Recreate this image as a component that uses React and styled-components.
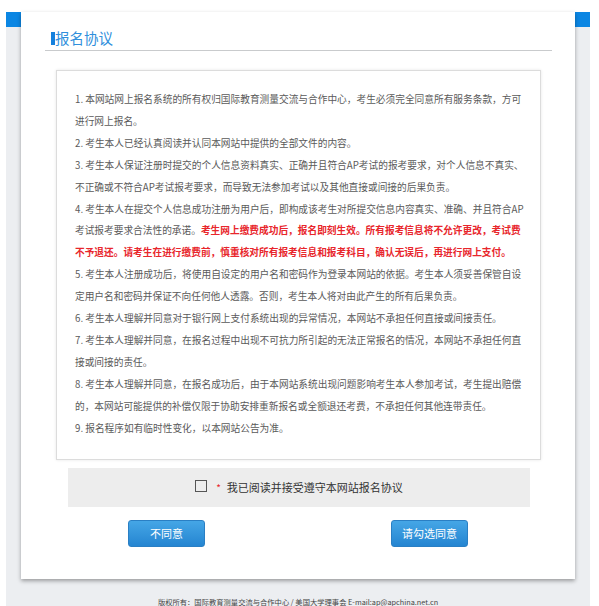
import React from 'react';
import styled, { createGlobalStyle } from 'styled-components';

const GlobalStyle = createGlobalStyle`
  html, body {
    margin: 0;
    padding: 0;
    background: #ffffff;
  }
  body {
    font-family: "Microsoft YaHei", "Noto Sans CJK SC", "Noto Sans", sans-serif;
  }
`;

const Page = styled.div`
  padding-top: 12px;
`;

const Frame = styled.div`
  margin-left: 6px;
  width: 584px;
  min-height: 594px;
  background: #eceef1;
  display: flex;
  flex-direction: column;
  align-items: center;
`;

const FrameRow = styled.div`
  display: flex;
  width: 100%;
`;

const Gutter = styled.div`
  width: 15px;
  flex: none;
`;

const CornerMark = styled.div`
  width: 15px;
  height: 15px;
  background: #0b86e3;
`;

const Card = styled.div`
  width: 554px;
  flex: none;
  background: #ffffff;
  box-shadow: 0 2px 4px rgba(0, 0, 0, 0.35);
  padding-bottom: 32px;
  position: relative;
  z-index: 1;
`;

const Header = styled.div`
  margin: 0 23px 0 24px;
  padding: 18px 0 4px 6px;
  border-bottom: 1px solid #c9cbcd;
`;

const Title = styled.h2`
  margin: 0;
  display: flex;
  align-items: center;
  height: 16px;
  font-size: 14.5px;
  font-weight: normal;
  color: #2f8fdc;
  line-height: 16px;

  &::before {
    content: '';
    display: block;
    width: 4px;
    height: 13px;
    background: #1580dd;
  }
`;

const TermsBox = styled.div`
  margin: 19px 34px 0 35px;
  padding: 18px 0 19px 18px;
  border: 1px solid #dcdcdc;
  box-shadow: 0 0 3px rgba(0, 0, 0, 0.1);
  font-size: 9.7px;
  line-height: 21.9px;
  color: #5a5a5a;
  white-space: nowrap;
`;

const Clause = styled.p`
  margin: 0;
`;

const Warn = styled.span`
  color: #e8262c;
  font-weight: bold;
`;

const AgreeBar = styled.label`
  margin: 8px 0 0 47px;
  width: 462px;
  height: 39px;
  background: #ededed;
  display: flex;
  align-items: center;
  justify-content: center;
  font-size: 11px;
  color: #333;
  cursor: pointer;
`;

const CheckBox = styled.span`
  width: 10px;
  height: 10px;
  border: 1px solid #555;
  margin-top: -3px;
`;

const Star = styled.span`
  color: #e8262c;
  font-size: 10px;
  margin: 0 6px 0 9px;
`;

const ButtonRow = styled.div`
  display: flex;
  gap: 186px;
  margin: 13px 0 0 107px;
`;

const Button = styled.button`
  width: 77px;
  height: 27px;
  padding: 0;
  border: 1px solid #2a7fc4;
  border-radius: 3px;
  background: linear-gradient(#45a6e6, #2585d1);
  color: #ffffff;
  font-family: inherit;
  font-size: 11px;
  cursor: pointer;
`;

const Footer = styled.div`
  margin-top: 18px;
  font-size: 7.3px;
  color: #444;
`;

const clauses = [
  ['1. 本网站网上报名系统的所有权归国际教育测量交流与合作中心，考生必须完全同意所有服务条款，方可', '进行网上报名。'],
  ['2. 考生本人已经认真阅读并认同本网站中提供的全部文件的内容。'],
  ['3. 考生本人保证注册时提交的个人信息资料真实、正确并且符合AP考试的报考要求，对个人信息不真实、', '不正确或不符合AP考试报考要求，而导致无法参加考试以及其他直接或间接的后果负责。'],
];

const laterClauses = [
  ['5. 考生本人注册成功后，将使用自设定的用户名和密码作为登录本网站的依据。考生本人须妥善保管自设', '定用户名和密码并保证不向任何他人透露。否则，考生本人将对由此产生的所有后果负责。'],
  ['6. 考生本人理解并同意对于银行网上支付系统出现的异常情况，本网站不承担任何直接或间接责任。'],
  ['7. 考生本人理解并同意，在报名过程中出现不可抗力所引起的无法正常报名的情况，本网站不承担任何直', '接或间接的责任。'],
  ['8. 考生本人理解并同意，在报名成功后，由于本网站系统出现问题影响考生本人参加考试，考生提出赔偿', '的，本网站可能提供的补偿仅限于协助安排重新报名或全额退还考费，不承担任何其他连带责任。'],
  ['9. 报名程序如有临时性变化，以本网站公告为准。'],
];

const renderClause = (lines) => (
  <Clause key={lines[0]}>
    {lines.map((line, i) => (
      <React.Fragment key={line}>
        {i > 0 && <br />}
        {line}
      </React.Fragment>
    ))}
  </Clause>
);

const App = () => (
  <Page>
    <GlobalStyle />
    <Frame>
      <FrameRow>
        <Gutter><CornerMark /></Gutter>
        <Card>
          <Header>
            <Title>报名协议</Title>
          </Header>
          <TermsBox>
            {clauses.map(renderClause)}
            <Clause>
              4. 考生本人在提交个人信息成功注册为用户后，即构成该考生对所提交信息内容真实、准确、并且符合AP
              <br />
              考试报考要求合法性的承诺。
              <Warn>考生网上缴费成功后，报名即刻生效。所有报考信息将不允许更改，考试费</Warn>
              <br />
              <Warn>不予退还。请考生在进行缴费前，慎重核对所有报考信息和报考科目，确认无误后，再进行网上支付。</Warn>
            </Clause>
            {laterClauses.map(renderClause)}
          </TermsBox>
          <AgreeBar>
            <CheckBox />
            <Star>*</Star>
            我已阅读并接受遵守本网站报名协议
          </AgreeBar>
          <ButtonRow>
            <Button type="button">不同意</Button>
            <Button type="button">请勾选同意</Button>
          </ButtonRow>
        </Card>
        <Gutter><CornerMark /></Gutter>
      </FrameRow>
      <Footer>版权所有：国际教育测量交流与合作中心 / 美国大学理事会 E-mail:ap@apchina.net.cn</Footer>
    </Frame>
  </Page>
);

export default App;
